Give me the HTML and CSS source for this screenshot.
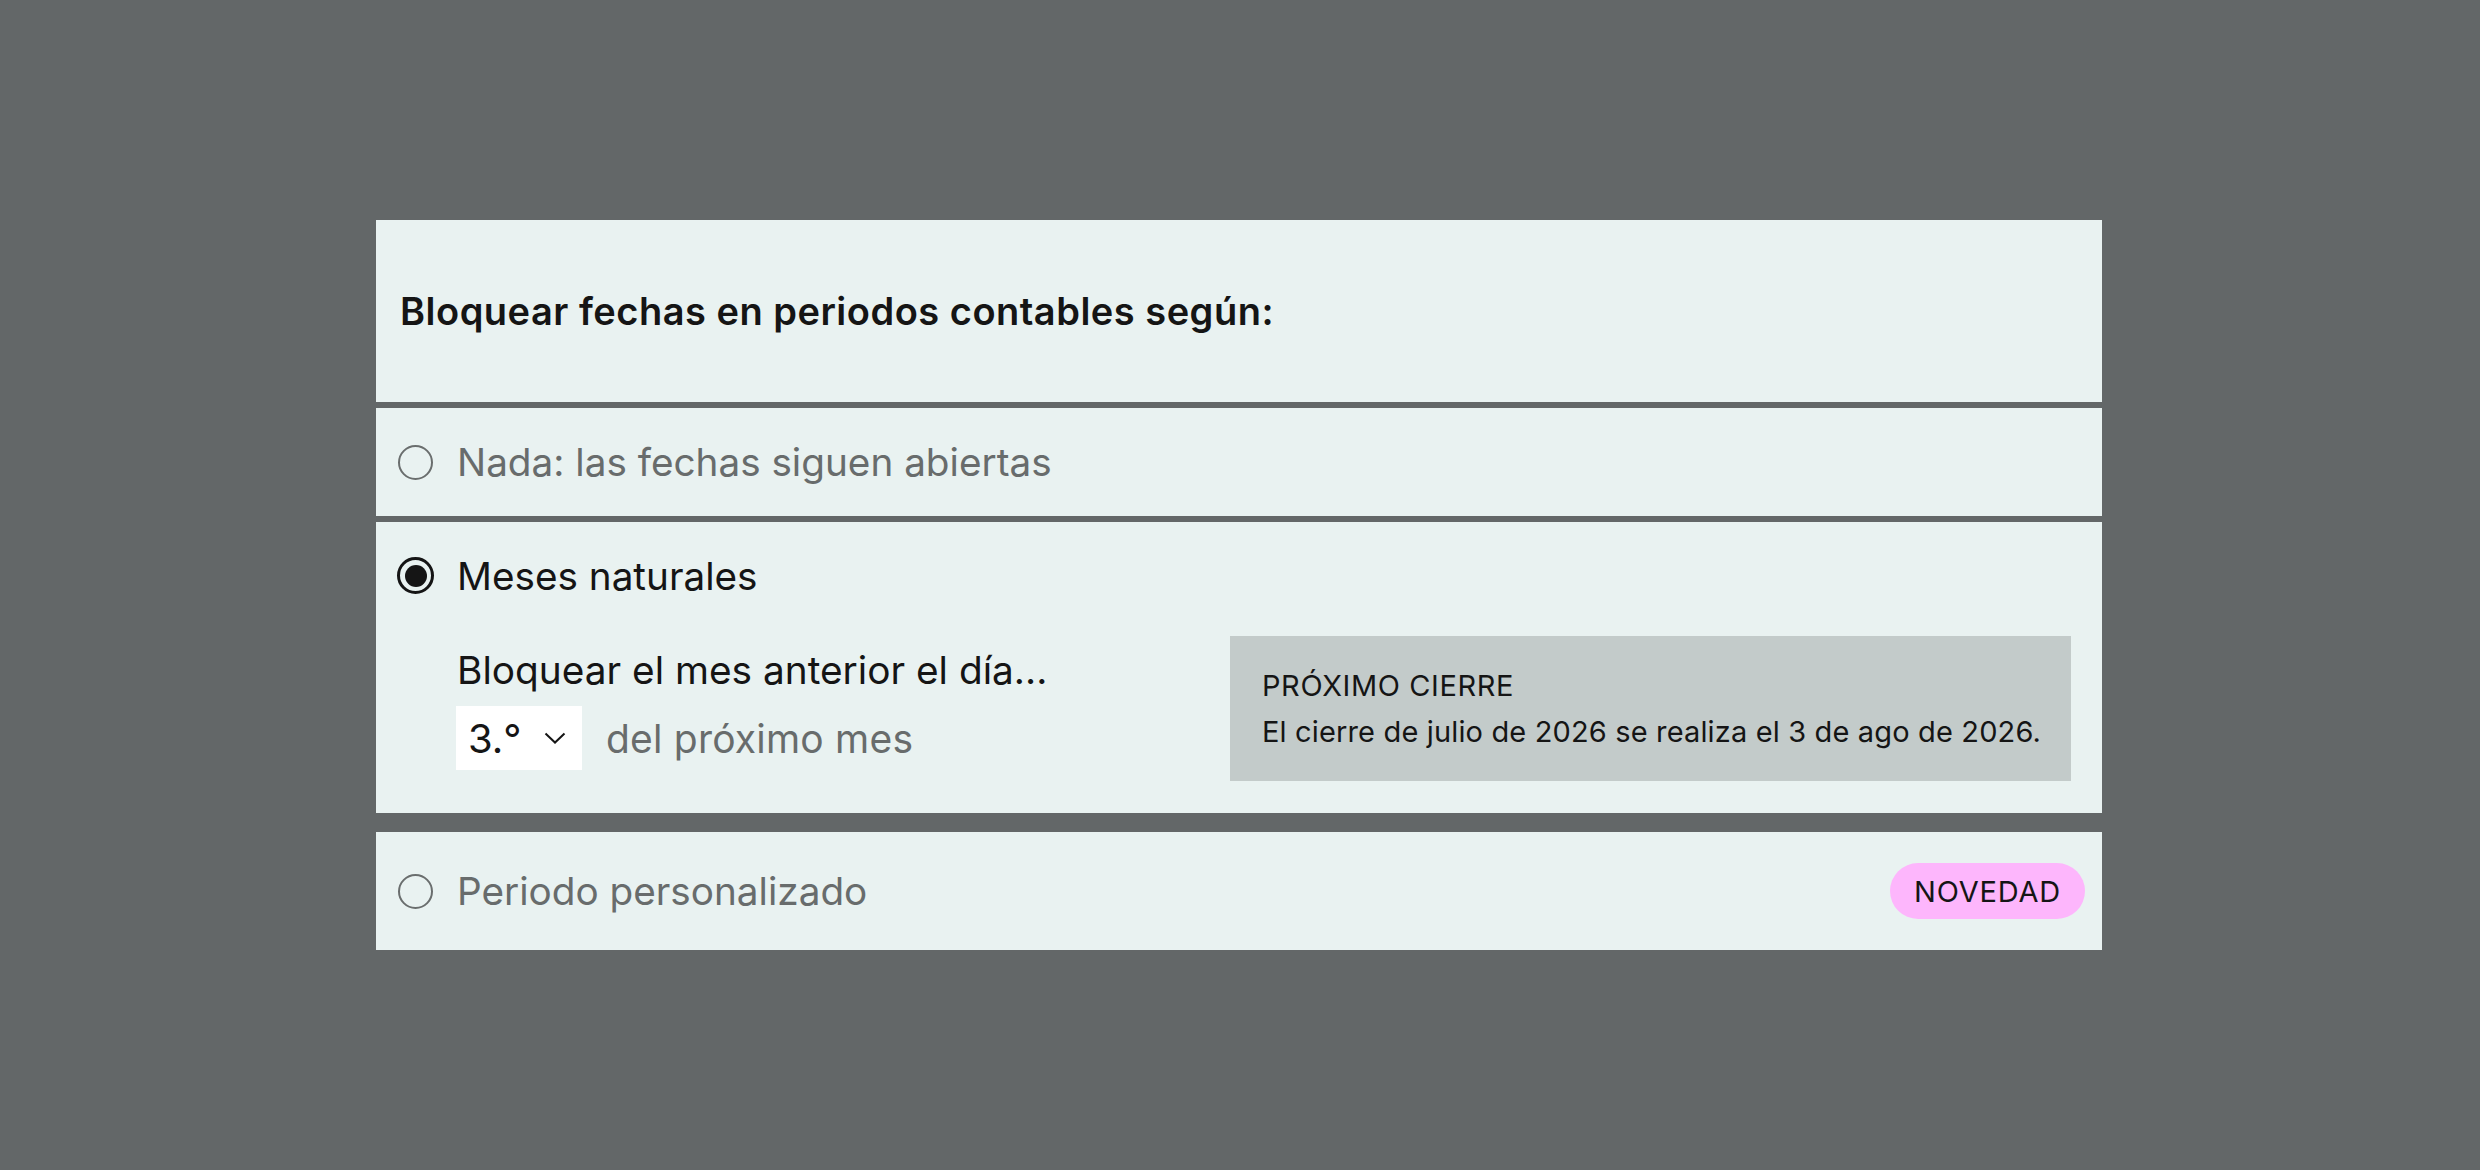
FILE: index.html
```html
<!DOCTYPE html>
<html lang="es">
<head>
<meta charset="utf-8">
<title>Bloquear fechas</title>
<link rel="stylesheet" href="styles.css">
</head>
<body>
<div class="panel">
  <div class="header">
    <h2 class="title">Bloquear fechas en periodos contables según:</h2>
  </div>
  <div class="option">
    <span class="radio"></span>
    <span class="label muted">Nada: las fechas siguen abiertas</span>
  </div>
  <div class="group">
    <div class="option option-head">
      <span class="radio checked"><span class="dot"></span></span>
      <span class="label">Meses naturales</span>
    </div>
    <div class="group-body">
      <div class="day-col">
        <div class="day-label">Bloquear el mes anterior el día...</div>
        <div class="day-row">
          <div class="select">
            <span class="select-value">3.°</span>
            <svg class="chevron" width="22" height="12" viewBox="0 0 22 12"><polyline points="1.5,1.5 11,10.5 20.5,1.5" fill="none" stroke="#151515" stroke-width="2"/></svg>
          </div>
          <span class="muted">del próximo mes</span>
        </div>
      </div>
      <div class="info">
        <div class="info-title">PRÓXIMO CIERRE</div>
        <div class="info-text">El cierre de julio de 2026 se realiza el 3 de ago de 2026.</div>
      </div>
    </div>
  </div>
  <div class="option option-last">
    <span class="radio"></span>
    <span class="label muted">Periodo personalizado</span>
    <span class="badge">NOVEDAD</span>
  </div>
</div>
</body>
</html>
```

FILE: styles.css
```css
html, body {
  margin: 0;
  padding: 0;
}
body {
  background: #636768;
  width: 2480px;
  height: 1170px;
  font-family: Inter, "Liberation Sans", sans-serif;
  color: #151515;
  overflow: hidden;
}
.panel {
  margin: 220px 0 0 376px;
  width: 1726px;
  display: flex;
  flex-direction: column;
  gap: 6px;
}
.header {
  background: #e9f2f1;
  height: 182px;
  display: flex;
  align-items: center;
  padding-left: 24px;
}
.title {
  margin: 0;
  font-size: 38px;
  font-weight: 600;
  letter-spacing: 0.5px;
}
.option {
  background: #e9f2f1;
  height: 108px;
  display: flex;
  align-items: center;
  padding: 0 17px 0 22px;
  gap: 24px;
}
.group {
  background: #e9f2f1;
  padding-bottom: 32px;
}
.option-head {
  height: 107px;
}
.option-last {
  height: 118px;
  margin-top: 13px;
}
.radio {
  width: 35px;
  height: 35px;
  box-sizing: border-box;
  border: 2px solid #6a6e6e;
  border-radius: 50%;
  flex: none;
  display: flex;
  align-items: center;
  justify-content: center;
}
.radio.checked {
  width: 37px;
  height: 37px;
  margin: 0 -1px;
  border: 3px solid #151515;
}
.dot {
  width: 22px;
  height: 22px;
  border-radius: 50%;
  background: #151515;
}
.label {
  font-size: 38.7px;
}
.muted {
  color: #686c6c;
}
.group-body {
  display: flex;
  align-items: center;
  margin-top: 7px;
  padding: 0 31px 0 80px;
}
.day-col {
  display: flex;
  flex-direction: column;
  gap: 13px;
}
.day-label {
  font-size: 38.8px;
  line-height: 46px;
  margin-left: 1px;
}
.day-row {
  display: flex;
  align-items: center;
  gap: 24px;
  font-size: 39px;
  letter-spacing: 0.2px;
}
.select {
  width: 126px;
  height: 64px;
  box-sizing: border-box;
  background: #ffffff;
  display: flex;
  align-items: center;
  justify-content: space-between;
  padding: 0 16px 0 12px;
}
.select-value {
  font-size: 40px;
  letter-spacing: 0;
  color: #151515;
}
.chevron {
  display: block;
}
.info {
  margin-left: auto;
  width: 841px;
  height: 145px;
  box-sizing: border-box;
  background: #c3cbca;
  padding: 0 20px 0 32px;
  display: flex;
  flex-direction: column;
  justify-content: center;
  gap: 4px;
  white-space: nowrap;
}
.info-title,
.info-text {
  font-size: 29px;
  line-height: 42px;
  letter-spacing: 0.15px;
}
.info-title {
  letter-spacing: 0.6px;
}
.badge {
  margin-left: auto;
  background: #fdb6fc;
  border-radius: 28px;
  height: 56px;
  padding: 0 24px;
  display: flex;
  align-items: center;
  font-size: 29px;
  letter-spacing: 0.8px;
  color: #151515;
}
```
